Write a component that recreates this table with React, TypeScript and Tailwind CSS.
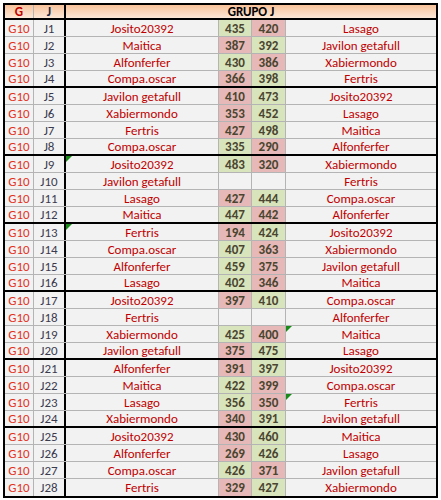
import React from "react";

type Row = {
  j: string;
  home: string;
  a: number | null;
  b: number | null;
  away: string;
  flag?: "home" | "b" | "away";
};

const rows: Row[] = [
  { j: "J1", home: "Josito20392", a: 435, b: 420, away: "Lasago" },
  { j: "J2", home: "Maitica", a: 387, b: 392, away: "Javilon getafull" },
  { j: "J3", home: "Alfonferfer", a: 430, b: 386, away: "Xabiermondo" },
  { j: "J4", home: "Compa.oscar", a: 366, b: 398, away: "Fertris" },
  { j: "J5", home: "Javilon getafull", a: 410, b: 473, away: "Josito20392" },
  { j: "J6", home: "Xabiermondo", a: 353, b: 452, away: "Lasago" },
  { j: "J7", home: "Fertris", a: 427, b: 498, away: "Maitica" },
  { j: "J8", home: "Compa.oscar", a: 335, b: 290, away: "Alfonferfer" },
  { j: "J9", home: "Josito20392", a: 483, b: 320, away: "Xabiermondo", flag: "home" },
  { j: "J10", home: "Javilon getafull", a: null, b: null, away: "Fertris" },
  { j: "J11", home: "Lasago", a: 427, b: 444, away: "Compa.oscar" },
  { j: "J12", home: "Maitica", a: 447, b: 442, away: "Alfonferfer" },
  { j: "J13", home: "Fertris", a: 194, b: 424, away: "Josito20392", flag: "home" },
  { j: "J14", home: "Compa.oscar", a: 407, b: 363, away: "Xabiermondo" },
  { j: "J15", home: "Alfonferfer", a: 459, b: 375, away: "Javilon getafull" },
  { j: "J16", home: "Lasago", a: 402, b: 346, away: "Maitica" },
  { j: "J17", home: "Josito20392", a: 397, b: 410, away: "Compa.oscar" },
  { j: "J18", home: "Fertris", a: null, b: null, away: "Alfonferfer" },
  { j: "J19", home: "Xabiermondo", a: 425, b: 400, away: "Maitica", flag: "away" },
  { j: "J20", home: "Javilon getafull", a: 375, b: 475, away: "Lasago" },
  { j: "J21", home: "Alfonferfer", a: 391, b: 397, away: "Josito20392" },
  { j: "J22", home: "Maitica", a: 422, b: 399, away: "Compa.oscar" },
  { j: "J23", home: "Lasago", a: 356, b: 350, away: "Fertris", flag: "away" },
  { j: "J24", home: "Xabiermondo", a: 340, b: 391, away: "Javilon getafull" },
  { j: "J25", home: "Josito20392", a: 430, b: 460, away: "Maitica" },
  { j: "J26", home: "Alfonferfer", a: 269, b: 426, away: "Lasago" },
  { j: "J27", home: "Compa.oscar", a: 426, b: 371, away: "Javilon getafull" },
  { j: "J28", home: "Fertris", a: 329, b: 427, away: "Xabiermondo" },
];

// little green error marker in the top-left corner of a cell
const Flag = () => (
  <svg className="absolute left-0 top-0" width="6" height="6" viewBox="0 0 6 6">
    <path d="M0 0H6L0 6Z" fill="#1a8a1a" />
  </svg>
);

const scoreBg = (mine: number | null, other: number | null) => {
  if (mine == null || other == null) return "bg-[#f2f2f2]";
  return mine > other ? "bg-[#d8e4bc]" : "bg-[#e6b8b7]";
};

const cell = "relative flex items-center justify-center border-r border-[#b4b4b4]";

const App: React.FC = () => {
  return (
    <div className="min-h-[500px] bg-white pl-[3px] pt-[3px]">
      <div
        className="w-[435px] border-2 border-black bg-[#f2f2f2] text-[13px] leading-none"
        style={{ fontFamily: "Calibri, Carlito, Lato, sans-serif" }}
      >
        {/* Header */}
        <div className="grid h-[15px] grid-cols-[29px_32px_1fr] border-b-2 border-black bg-gradient-to-b from-[#f8c29a] to-[#fde8d8] font-bold">
          <div className={`${cell} text-[#c00000]`}>G</div>
          <div className="flex items-center justify-center border-r-2 border-black text-[#1f2a44]">J</div>
          <div className="flex items-center justify-center text-black">GRUPO J</div>
        </div>

        {rows.map((r, i) => {
          const last = i === rows.length - 1;
          const groupEnd = (i + 1) % 4 === 0 && !last;
          return (
            <div
              key={r.j}
              className={`grid h-[17px] grid-cols-[29px_32px_153px_33px_34px_1fr] ${
                groupEnd ? "border-b-2 border-black" : last ? "" : "border-b border-[#b4b4b4]"
              }`}
            >
              <div className={`${cell} text-[#e2311d]`}>G10</div>
              <div className="flex items-center justify-center border-r-2 border-black text-[#3b3b4f]">{r.j}</div>
              <div className={`${cell} text-[#c00000]`}>
                {r.flag === "home" && <Flag />}
                {r.home}
              </div>
              <div className={`${cell} ${scoreBg(r.a, r.b)} font-bold text-[#4a4530]`}>{r.a ?? ""}</div>
              <div className={`${cell} ${scoreBg(r.b, r.a)} font-bold text-[#4a4530]`}>
                {r.flag === "b" && <Flag />}
                {r.b ?? ""}
              </div>
              <div className="relative flex items-center justify-center text-[#c00000]">
                {r.flag === "away" && <Flag />}
                {r.away}
              </div>
            </div>
          );
        })}
      </div>
    </div>
  );
};

export default App;
